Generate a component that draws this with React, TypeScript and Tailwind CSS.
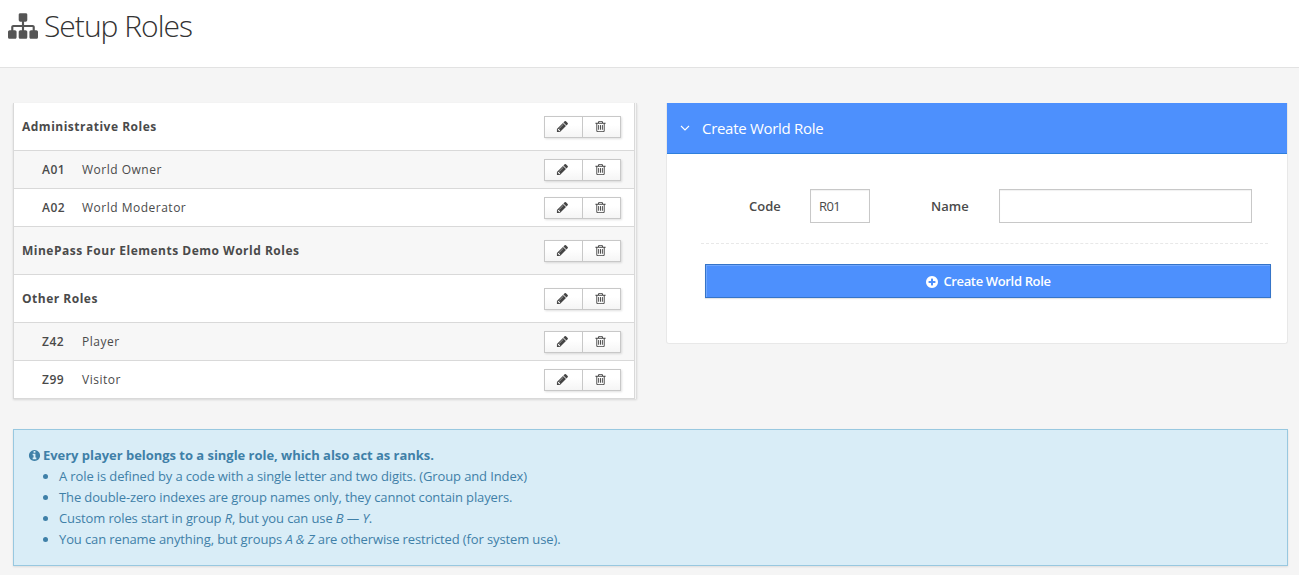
import React from 'react';

const ICONS = {
  sitemap:
    'M1792 1248v320q0 40-28 68t-68 28h-320q-40 0-68-28t-28-68v-320q0-40 28-68t68-28h96v-192h-512v192h96q40 0 68 28t28 68v320q0 40-28 68t-68 28h-320q-40 0-68-28t-28-68v-320q0-40 28-68t68-28h96v-192h-512v192h96q40 0 68 28t28 68v320q0 40-28 68t-68 28h-320q-40 0-68-28t-28-68v-320q0-40 28-68t68-28h96v-192q0-52 38-90t90-38h512v-192h-96q-40 0-68-28t-28-68v-320q0-40 28-68t68-28h320q40 0 68 28t28 68v320q0 40-28 68t-68 28h-96v192h512q52 0 90 38t38 90v192h96q40 0 68 28t28 68z',
  pencil:
    'M491 1536l91-91-235-235-91 91v107h128v128h107zm523-928q0-22-22-22-10 0-17 7l-542 542q-7 7-7 17 0 22 22 22 10 0 17-7l542-542q7-7 7-17zm-54-192l416 416-832 832h-416v-416zm683 96q0 53-37 90l-166 166-416-416 166-165q36-38 90-38 53 0 91 38l235 234q37 39 37 91z',
  trash:
    'M704 736v576q0 14-9 23t-23 9h-64q-14 0-23-9t-9-23v-576q0-14 9-23t23-9h64q14 0 23 9t9 23zm256 0v576q0 14-9 23t-23 9h-64q-14 0-23-9t-9-23v-576q0-14 9-23t23-9h64q14 0 23 9t9 23zm256 0v576q0 14-9 23t-23 9h-64q-14 0-23-9t-9-23v-576q0-14 9-23t23-9h64q14 0 23 9t9 23zm128 724v-948h-896v948q0 22 7 40.5t14.5 27 10.5 8.5h832q3 0 10.5-8.5t14.5-27 7-40.5zm-672-1076h448l-48-117q-7-9-17-11h-317q-10 2-17 11zm928 32v64q0 14-9 23t-23 9h-96v948q0 83-47 143.5t-113 60.5h-832q-66 0-113-58.5t-47-141.5v-952h-96q-14 0-23-9t-9-23v-64q0-14 9-23t23-9h309l70-167q15-37 54-63t79-26h320q40 0 79 26t54 63l70 167h309q14 0 23 9t9 23z',
  plus:
    'M1344 960v-128q0-26-19-45t-45-19h-256v-256q0-26-19-45t-45-19h-128q-26 0-45 19t-19 45v256h-256q-26 0-45 19t-19 45v128q0 26 19 45t45 19h256v256q0 26 19 45t45 19h128q26 0 45-19t19-45v-256h256q26 0 45-19t19-45zm320-64q0 209-103 385.5t-279.5 279.5-385.5 103-385.5-103-279.5-279.5-103-385.5 103-385.5 279.5-279.5 385.5-103 385.5 103 279.5 279.5 103 385.5z',
  info:
    'M1152 1376v-160q0-14-9-23t-23-9h-96v-512q0-14-9-23t-23-9h-320q-14 0-23 9t-9 23v160q0 14 9 23t23 9h96v320h-96q-14 0-23 9t-9 23v160q0 14 9 23t23 9h448q14 0 23-9t9-23zm-128-896v-160q0-14-9-23t-23-9h-192q-14 0-23 9t-9 23v160q0 14 9 23t23 9h192q14 0 23-9t9-23zm640 416q0 209-103 385.5t-279.5 279.5-385.5 103-385.5-103-279.5-279.5-103-385.5 103-385.5 279.5-279.5 385.5-103 385.5 103 279.5 279.5 103 385.5z',
};

function Icon({ name, className }: { name: keyof typeof ICONS; className: string }) {
  return (
    <svg viewBox="0 0 1792 1792" fill="currentColor" aria-hidden="true" className={`shrink-0 ${className}`}>
      <path d={ICONS[name]} />
    </svg>
  );
}

type Role = { code?: string; name: string };

const ROLES: Role[] = [
  { name: 'Administrative Roles' },
  { code: 'A01', name: 'World Owner' },
  { code: 'A02', name: 'World Moderator' },
  { name: 'MinePass Four Elements Demo World Roles' },
  { name: 'Other Roles' },
  { code: 'Z42', name: 'Player' },
  { code: 'Z99', name: 'Visitor' },
];

function RowActions() {
  return (
    <div className="flex h-[22px] w-[77px] border border-[#c8c8c8] bg-linear-to-b from-white from-40% to-[#f5f5f5] text-[#444] shadow-[1px_1px_2px_rgba(0,0,0,0.12)]">
      <button className="flex w-[38px] items-center justify-center border-r border-[#c8c8c8] pr-[2px]">
        <Icon name="pencil" className="size-[13px]" />
      </button>
      <button className="flex flex-1 items-center justify-center pr-[2px]">
        <Icon name="trash" className="size-[13px]" />
      </button>
    </div>
  );
}

function RoleRow({ role }: { role: Role }) {
  return (
    <li
      className={`flex items-center justify-between border-b border-[#d9d9d9] pr-[13px] odd:bg-white even:bg-[#f7f7f7] ${
        role.code ? 'h-[38px] pl-7' : 'h-12 pl-2'
      }`}
    >
      {role.code ? (
        <div className="flex">
          <span className="w-10 font-semibold">{role.code}</span>
          <span>{role.name}</span>
        </div>
      ) : (
        <div className="font-bold">{role.name}</div>
      )}
      <RowActions />
    </li>
  );
}

export default function App() {
  return (
    <div className="h-[575px] overflow-hidden bg-[#f5f5f5] font-['Open_Sans',sans-serif] text-[13px] text-[#4a4a4a]">
      <header className="flex h-[68px] items-start border-b border-[#e2e2e2] bg-white pl-2">
        <Icon name="sitemap" className="mt-[11px] size-[30px] text-[#555]" />
        <h1 className="ml-[6px] mt-[6px] text-[30px] font-light leading-10 tracking-[-1px] text-[#333]">Setup Roles</h1>
      </header>

      <main className="px-[13px] pt-[35px]">
        <div className="flex items-start">
          <div className="mr-[29px] w-[624px] shrink-0 border-r border-[#dedede] pr-px shadow-[0_1px_2px_rgba(0,0,0,0.12)]">
            <ul className="border-x border-[#d9d9d9] text-[12px] leading-[18px] tracking-[0.5px]">
              {ROLES.map((role) => (
                <RoleRow key={role.name} role={role} />
              ))}
            </ul>
          </div>

          <section className="h-[241px] w-[622px] shrink-0 rounded-b-[3px] border border-t-0 border-[#e8e8e8] bg-white">
            <div className="flex h-[51px] items-center border-b border-[#2f7fdc] bg-[#4d90fd] pl-[13px] text-white">
              <svg viewBox="0 0 10 6" className="w-[10px]" fill="none" stroke="currentColor" strokeWidth="1.1">
                <path d="M1 1l4 4 4-4" />
              </svg>
              <h2 className="ml-3 text-[15px] leading-5 tracking-[-0.3px]">Create World Role</h2>
            </div>
            <div className="ml-[34px] mr-[19px] flex h-[90px] items-center border-b border-dashed border-[#e8e8e8] pl-12 pt-[15px]">
              <label className="w-[61px] pt-[2px] font-semibold">Code</label>
              <input
                className="h-[34px] w-[60px] border border-[#c8c8c8] bg-white px-2 text-[13px] tracking-[-0.6px] shadow-[inset_0_1px_1px_rgba(0,0,0,0.06)]"
                defaultValue="R01"
              />
              <label className="ml-[61px] w-[68px] pt-[2px] font-semibold">Name</label>
              <input className="h-[34px] w-[253px] border border-[#c8c8c8] bg-white px-2 text-[13px] shadow-[inset_0_1px_1px_rgba(0,0,0,0.06)]" />
            </div>
            <button className="ml-[38px] mt-5 flex h-[34px] w-[566px] items-center justify-center border border-[#3574c8] bg-[#4d90fd] pt-px text-[13px] font-semibold tracking-[-0.35px] text-white shadow-[inset_1px_1px_0_rgba(255,255,255,0.2),0_1px_1px_rgba(0,0,0,0.1)]">
              <Icon name="plus" className="mr-1 size-[14px]" />
              Create World Role
            </button>
          </section>
        </div>

        <section className="mr-[-2px] mt-[30px] h-[137px] w-[1275px] border border-[#98c8e0] bg-[#d9edf7] pl-[14px] pt-[15px] leading-[21px] text-[#3f80a8] shadow-[0_1px_2px_rgba(0,0,0,0.1)]">
          <div className="flex items-center font-bold">
            <Icon name="info" className="mr-[2px] size-[13px]" />
            <span className="tracking-[-0.035px]">Every player belongs to a single role, which also act as ranks.</span>
          </div>
          <ul className="list-disc pl-[31px] tracking-[-0.12px]">
            <li>A role is defined by a code with a single letter and two digits. (Group and Index)</li>
            <li>The double-zero indexes are group names only, they cannot contain players.</li>
            <li>
              Custom roles start in group <em>R</em>, but you can use <em>B — Y</em>.
            </li>
            <li>
              You can rename anything, but groups <em>A &amp; Z</em> are otherwise restricted (for system use).
            </li>
          </ul>
        </section>
      </main>
    </div>
  );
}
